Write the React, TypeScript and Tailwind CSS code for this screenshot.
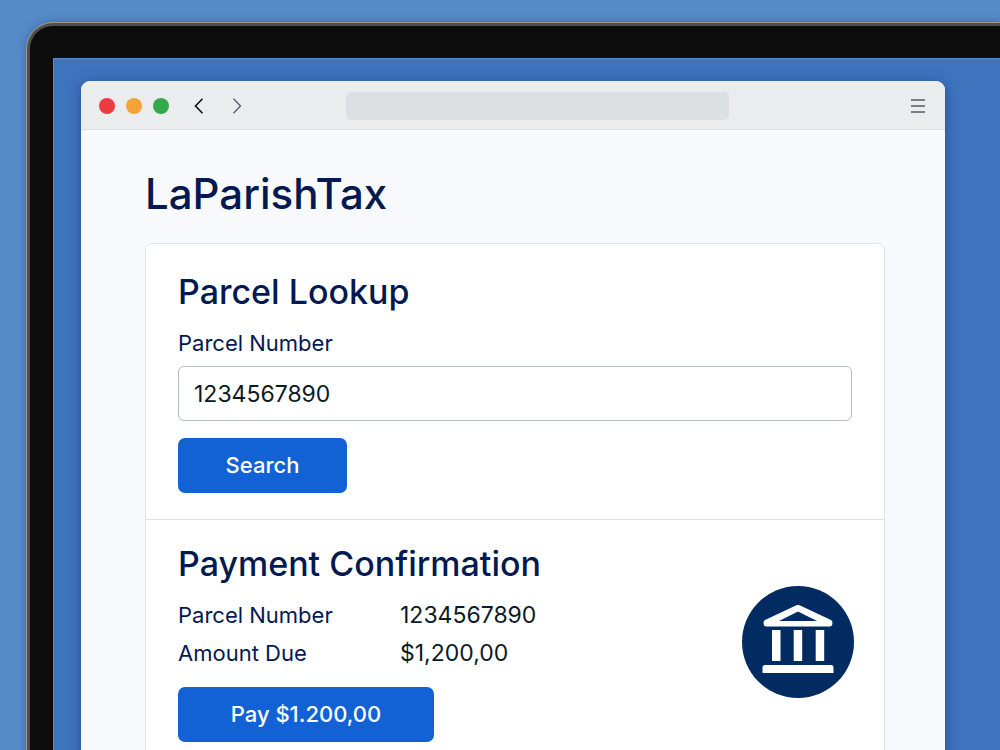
import { useState } from "react";

const details = [
  { label: "Parcel Number", value: "1234567890" },
  { label: "Amount Due", value: "$1,200,00" },
];

function BankIcon() {
  return (
    <svg className="w-28 h-28 mb-0.5 shrink-0" viewBox="0 0 112 112" role="img" aria-label="Bank">
      <circle cx="56" cy="56" r="56" fill="#022b62" />
      <g fill="#ffffff">
        <path
          fillRule="evenodd"
          d="M54.4 19.300q1.600-.8 3.200 0L89 34q1.400.7 1.400 2.200v1.800q0 2.400-2.400 2.400H24q-2.400 0-2.400-2.400v-1.800q0-1.500 1.400-2.200ZM56 25.500 37 35H75Z"
        />
        <rect x="30" y="44" width="8.5" height="31" />
        <rect x="51.700" y="44" width="8.5" height="31" />
        <rect x="73.700" y="44" width="8.5" height="31" />
        <path d="M23 79h66q2.500 0 2.500 2.500V87H20.500v-5.500q0-2.500 2.500-2.500Z" />
      </g>
    </svg>
  );
}

function BrowserBar() {
  return (
    <header className="flex items-center h-[49px] pt-0.5 px-[18px] bg-[#ebecee] border-b border-[#dcdfe4] rounded-t-[9px]">
      <div className="w-[247px] shrink-0 flex items-center">
        <div className="flex gap-[11px]">
          <span className="w-4 h-4 rounded-full bg-[#ee3b42]" />
          <span className="w-4 h-4 rounded-full bg-[#f5a23b]" />
          <span className="w-4 h-4 rounded-full bg-[#34a94c]" />
        </div>
        <button type="button" aria-label="Back" className="ml-[25px] text-[#111111]">
          <svg className="w-2.5 h-4" viewBox="0 0 10 16" fill="none" stroke="currentColor" strokeWidth="1.6">
            <path d="M8.500.8 1.500 8l7 7.200" />
          </svg>
        </button>
        <button type="button" aria-label="Forward" className="ml-7 text-[#5a5c60]">
          <svg className="w-2.5 h-4" viewBox="0 0 10 16" fill="none" stroke="currentColor" strokeWidth="1.3">
            <path d="M1.500.8l7 7.200-7 7.200" />
          </svg>
        </button>
      </div>
      <input
        type="text"
        aria-label="Address"
        className="flex-1 min-w-0 h-7 px-3 rounded-[5px] bg-[#dde0e3] text-sm outline-none"
      />
      <div className="w-[198px] shrink-0 flex justify-end pr-px">
        <button type="button" aria-label="Menu" className="text-[#55585d]">
          <svg className="w-4 h-4" viewBox="0 0 16 16" stroke="currentColor" strokeWidth="1.4">
            <path d="M1 2h14M1 8h14M1 14h14" />
          </svg>
        </button>
      </div>
    </header>
  );
}

export default function App() {
  const [parcel, setParcel] = useState("1234567890");

  return (
    <div className="h-screen overflow-hidden pt-[22px] pl-[26px] bg-[#548bc8] font-['Inter',sans-serif]">
      {/* Monitor */}
      <div className="pt-px pl-px bg-[#a19a88] rounded-tl-[27px] shadow-[0_0_8px_rgba(20,50,100,0.35)]">
        <div className="pt-[3px] pl-[3px] bg-[#4d4e50] rounded-tl-[26px]">
          <div className="pt-8 pl-[23px] bg-[#0c0c0c] rounded-tl-[23px]">
            <div className="pt-[22px] pl-[27px] pr-[55px] bg-[#3f73bd] border-t border-l border-[#5c8dcc]">
              {/* Browser window */}
              <div className="rounded-t-[9px] bg-[#f7f9fc] shadow-[0_2px_12px_rgba(10,40,100,0.5)]">
                <BrowserBar />
                <main className="pt-9 pl-16 pr-15 pb-16 text-[#03194f]">
                  <h1 className="text-[42px] leading-14 font-medium">LaParishTax</h1>

                  <div className="mt-[21px] bg-white border border-[#dfe3e9] rounded-[7px]">
                    <form className="pt-7 px-8 pb-[26px]" onSubmit={(e) => e.preventDefault()}>
                      <h2 className="text-[34px] leading-10 font-medium">Parcel Lookup</h2>
                      <label htmlFor="parcel" className="block mt-[17px] text-[22px] leading-7">
                        Parcel Number
                      </label>
                      <input
                        id="parcel"
                        type="text"
                        value={parcel}
                        onChange={(e) => setParcel(e.target.value)}
                        className="block w-full h-[55px] mt-[9px] px-[15px] border border-[#b3bcc8] rounded-md bg-white text-[23px] text-[#0b1a24] outline-none"
                      />
                      <button
                        type="submit"
                        className="mt-[17px] w-[169px] h-[55px] rounded-[7px] bg-[#1262d5] text-white text-[22px] font-medium"
                      >
                        Search
                      </button>
                    </form>

                    {/* Payment */}
                    <section className="flex items-center justify-between pt-6 pl-8 pr-[30px] pb-8 border-t border-[#dfe3e9]">
                      <div>
                        <h2 className="text-[34px] leading-10 font-medium">Payment Confirmation</h2>
                        <dl className="grid grid-cols-[222px_auto] mt-3 text-[22px] leading-[38px]">
                          {details.map((row) => (
                            <div key={row.label} className="contents">
                              <dt>{row.label}</dt>
                              <dd className="text-[23px] text-[#0b1a24]">{row.value}</dd>
                            </div>
                          ))}
                        </dl>
                        <button
                          type="button"
                          className="mt-[15px] w-64 h-[55px] rounded-[7px] bg-[#1262d5] text-white text-[22px] font-medium"
                        >
                          Pay $1.200,00
                        </button>
                      </div>
                      <BankIcon />
                    </section>
                  </div>
                </main>
              </div>
            </div>
          </div>
        </div>
      </div>
    </div>
  );
}
